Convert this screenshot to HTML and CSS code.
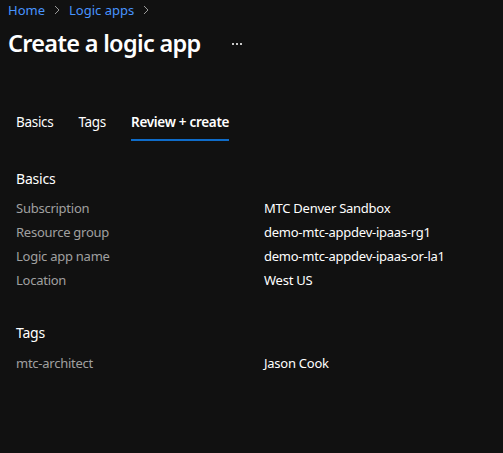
FILE: index.html
```html
<!DOCTYPE html>
<html>
<head>
<meta charset="utf-8">
<link rel="stylesheet" href="styles.css">
</head>
<body>
<div class="page">
  <nav class="crumbs">
    <a class="crumb">Home</a>
    <span class="chev"><svg width="8" height="10" viewBox="0 0 8 10"><path d="M2 1l4 4-4 4" fill="none" stroke="#9a9a9a" stroke-width="1"/></svg></span>
    <a class="crumb">Logic apps</a>
    <span class="chev"><svg width="8" height="10" viewBox="0 0 8 10"><path d="M2 1l4 4-4 4" fill="none" stroke="#9a9a9a" stroke-width="1"/></svg></span>
  </nav>
  <header class="titlebar">
    <h1 class="title">Create a logic app</h1>
    <span class="more"><i></i><i></i><i></i></span>
  </header>
  <div class="tabs">
    <span class="tab">Basics</span>
    <span class="tab">Tags</span>
    <span class="tab active">Review + create</span>
  </div>
  <section class="section">
    <h2 class="heading">Basics</h2>
    <div class="row"><span class="label">Subscription</span><span class="value">MTC Denver Sandbox</span></div>
    <div class="row"><span class="label">Resource group</span><span class="value">demo-mtc-appdev-ipaas-rg1</span></div>
    <div class="row"><span class="label">Logic app name</span><span class="value">demo-mtc-appdev-ipaas-or-la1</span></div>
    <div class="row"><span class="label">Location</span><span class="value">West US</span></div>
  </section>
  <section class="section tags">
    <h2 class="heading">Tags</h2>
    <div class="row"><span class="label">mtc-architect</span><span class="value">Jason Cook</span></div>
  </section>
</div>
</body>
</html>
```
FILE: styles.css
```css
html, body {
  margin: 0;
  padding: 0;
  background: #111111;
  height: 100%;
}
body {
  font-family: "Noto Sans", "Open Sans", sans-serif;
  font-size: 13px;
  color: #ffffff;
}
.page {
  padding: 0 8px;
}
.crumbs {
  display: flex;
  align-items: center;
  height: 20px;
  gap: 8px;
}
.crumb {
  color: #4894fe;
  font-size: 13px;
}
.chev {
  display: flex;
  align-items: center;
}
.titlebar {
  display: flex;
  align-items: center;
  height: 46px;
}
.title {
  margin: 0;
  font-size: 23.5px;
  font-weight: 600;
  color: #ffffff;
  letter-spacing: -0.7px;
}
.more {
  display: flex;
  gap: 2px;
  margin-left: 32px;
  margin-top: 2px;
}
.more i {
  width: 2px;
  height: 2px;
  background: #c8c8c8;
  display: block;
}
.tabs {
  display: flex;
  gap: 25px;
  padding: 0 8px;
  margin-top: 46px;
  height: 30px;
}
.tab {
  font-size: 13.5px;
  color: #ffffff;
  line-height: 20px;
  height: 28px;
  box-sizing: border-box;
  letter-spacing: -0.3px;
}
.tab.active {
  font-weight: 600;
  border-bottom: 2px solid #0f6cc9;
  height: 29px;
  letter-spacing: -0.3px;
}
.section {
  padding: 0 8px;
  margin-top: 27px;
}
.heading {
  margin: 0 0 7px 0;
  font-size: 14px;
  font-weight: 400;
  line-height: 20px;
  color: #ffffff;
  letter-spacing: -0.2px;
}
.row {
  display: grid;
  grid-template-columns: 248px 1fr;
  line-height: 24px;
  letter-spacing: -0.25px;
}
.label {
  color: #a0a0a0;
}
.value {
  color: #ffffff;
}
.section.tags {
  margin-top: 31px;
}
.section.tags .heading {
  margin-bottom: 8px;
}
```
